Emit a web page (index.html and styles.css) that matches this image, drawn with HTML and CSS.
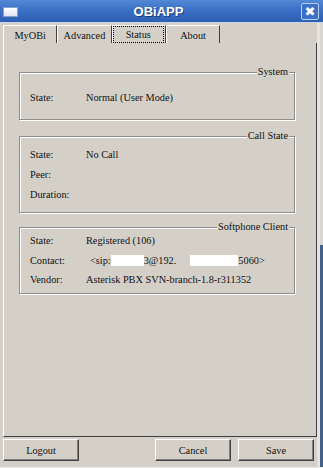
FILE: index.html
```html
<!DOCTYPE html>
<html lang="en">
<head>
  <meta charset="UTF-8">
  <title>OBiAPP</title>
  <link rel="stylesheet" href="styles.css">
</head>
<body>

  <div class="titlebar">
    <span class="app-icon"></span>
    <span class="title">OBiAPP</span>
    <span class="close">✖</span>
  </div>

  <div class="frame">
    <div class="main">

      <div class="tabs">
        <div class="tab">MyOBi</div>
        <div class="tab">Advanced</div>
        <div class="tab active"><span class="focus">Status</span></div>
        <div class="tab">About</div>
      </div>

      <div class="panel">

        <div class="group system">
          <span class="legend">System</span>
          <div class="row"><span class="label">State:</span><span>Normal (User Mode)</span></div>
        </div>

        <div class="group call">
          <span class="legend">Call State</span>
          <div class="row"><span class="label">State:</span><span>No Call</span></div>
          <div class="row"><span class="label">Peer:</span><span></span></div>
          <div class="row"><span class="label">Duration:</span><span></span></div>
        </div>

        <div class="group soft">
          <span class="legend">Softphone Client</span>
          <div class="row"><span class="label">State:</span><span>Registered (106)</span></div>
          <div class="row">
            <span class="label">Contact:</span>
            <span class="contact">&lt;sip:<span class="blank b1"></span>3@192.<span class="blank b2"></span>5060&gt;</span>
          </div>
          <div class="row"><span class="label">Vendor:</span><span>Asterisk PBX SVN-branch-1.8-r311352</span></div>
        </div>

      </div>

      <div class="buttons">
        <button class="btn">Logout</button>
        <span class="spacer"></span>
        <button class="btn">Cancel</button>
        <button class="btn">Save</button>
      </div>

    </div>
    <div class="edge"></div>
  </div>

</body>
</html>
```

FILE: styles.css
```css
body {
  margin: 0;
  width: 323px;
  height: 468px;
  overflow: hidden;
  background: #ecebe6;
  font-family: "Liberation Serif", "Times New Roman", serif;
  font-size: 10.3px;
  color: #111;
}

.titlebar {
  height: 22px;
  display: flex;
  align-items: center;
  background: linear-gradient(#5489d6, #3a70c6 45%, #2d5fb2);
  border-bottom: 1px solid #c9d5e8;
}

.app-icon {
  width: 13px;
  height: 8px;
  margin-left: 3px;
  margin-top: 2px;
  background: linear-gradient(#ffffff, #dfe3ee);
  border: 1px solid #8aa2c8;
}

.title {
  flex: 1;
  text-align: center;
  font-family: "Liberation Sans", Arial, sans-serif;
  font-weight: bold;
  font-size: 13px;
  color: #fff;
  text-shadow: 1px 1px 0 #1d3f7a;
  margin-left: -2px;
}

.close {
  width: 16px;
  height: 15px;
  margin-right: 4px;
  border: 1px solid #b9cff2;
  border-radius: 2px;
  background: #3b70c9;
  color: #fff;
  font-family: "DejaVu Sans", sans-serif;
  font-size: 13px;
  line-height: 15px;
  text-align: center;
}

.frame {
  display: flex;
}

.main {
  width: 317px;
  background: #d4d0c8;
}

.edge {
  width: 6px;
  background:
    linear-gradient(to right, #e6e4de 0 3px, transparent 3px),
    linear-gradient(#d8d6d0 0 222px, #3f618a 222px);
}

.tabs {
  height: 18px;
  padding-top: 2px;
  padding-left: 3px;
  display: flex;
}

.tab {
  width: 54.3px;
  box-sizing: border-box;
  border-left: 1px solid #fff;
  border-top: 1px solid #fff;
  border-right: 1px solid #404040;
  display: flex;
  align-items: center;
  justify-content: center;
  padding-top: 1px;
}

.tab.active {
  padding: 0;
}

.focus {
  flex: 1;
  align-self: stretch;
  display: flex;
  align-items: center;
  justify-content: center;
  border: 1px dotted #000;
  margin-right: 1px;
}

.panel {
  margin-left: 3px;
  height: 394px;
  border-left: 1px solid #fff;
  border-right: 1px solid #404040;
  border-bottom: 1px solid #404040;
  padding-top: 29px;
  box-sizing: border-box;
}

.group {
  position: relative;
  width: 276px;
  margin-left: 15px;
  box-sizing: border-box;
  border: 1px solid #8d8d8d;
  box-shadow: inset 1px 1px 0 #fff, 1px 1px 0 #fff;
  padding-left: 10px;
}

.system {
  height: 48px;
  padding-top: 14px;
}

.call {
  height: 77px;
  margin-top: 16px;
  padding-top: 7px;
}

.soft {
  height: 67px;
  margin-top: 14px;
  padding-top: 3px;
}

.legend {
  position: absolute;
  right: 5px;
  top: -7px;
  line-height: 12px;
  padding: 0 1px;
  background: #d4d0c8;
}

.row {
  height: 20px;
  display: flex;
  align-items: center;
}

.soft .row {
  height: 19.5px;
}

.label {
  width: 56px;
}

.contact {
  margin-left: 4px;
  display: flex;
  align-items: center;
}

.blank {
  display: inline-block;
  height: 11px;
  background: #fff;
}

.b1 {
  width: 33px;
}

.b2 {
  width: 48px;
  margin-left: 14px;
}

.buttons {
  display: flex;
  height: 22px;
  margin-top: 2px;
  padding-left: 3px;
  padding-bottom: 6px;
  background: #d4d0c8;
}

.btn {
  width: 76px;
  height: 22px;
  padding: 0;
  font-family: inherit;
  font-size: 10.3px;
  color: #111;
  background: #d4d0c8;
  border: 1px solid;
  border-color: #fff #404040 #404040 #fff;
  box-shadow: inset -1px -1px 0 #808080;
}

.spacer {
  flex: 1;
}

.btn + .btn {
  margin-left: 7px;
}

.btn:last-child {
  margin-right: 3px;
}
```
